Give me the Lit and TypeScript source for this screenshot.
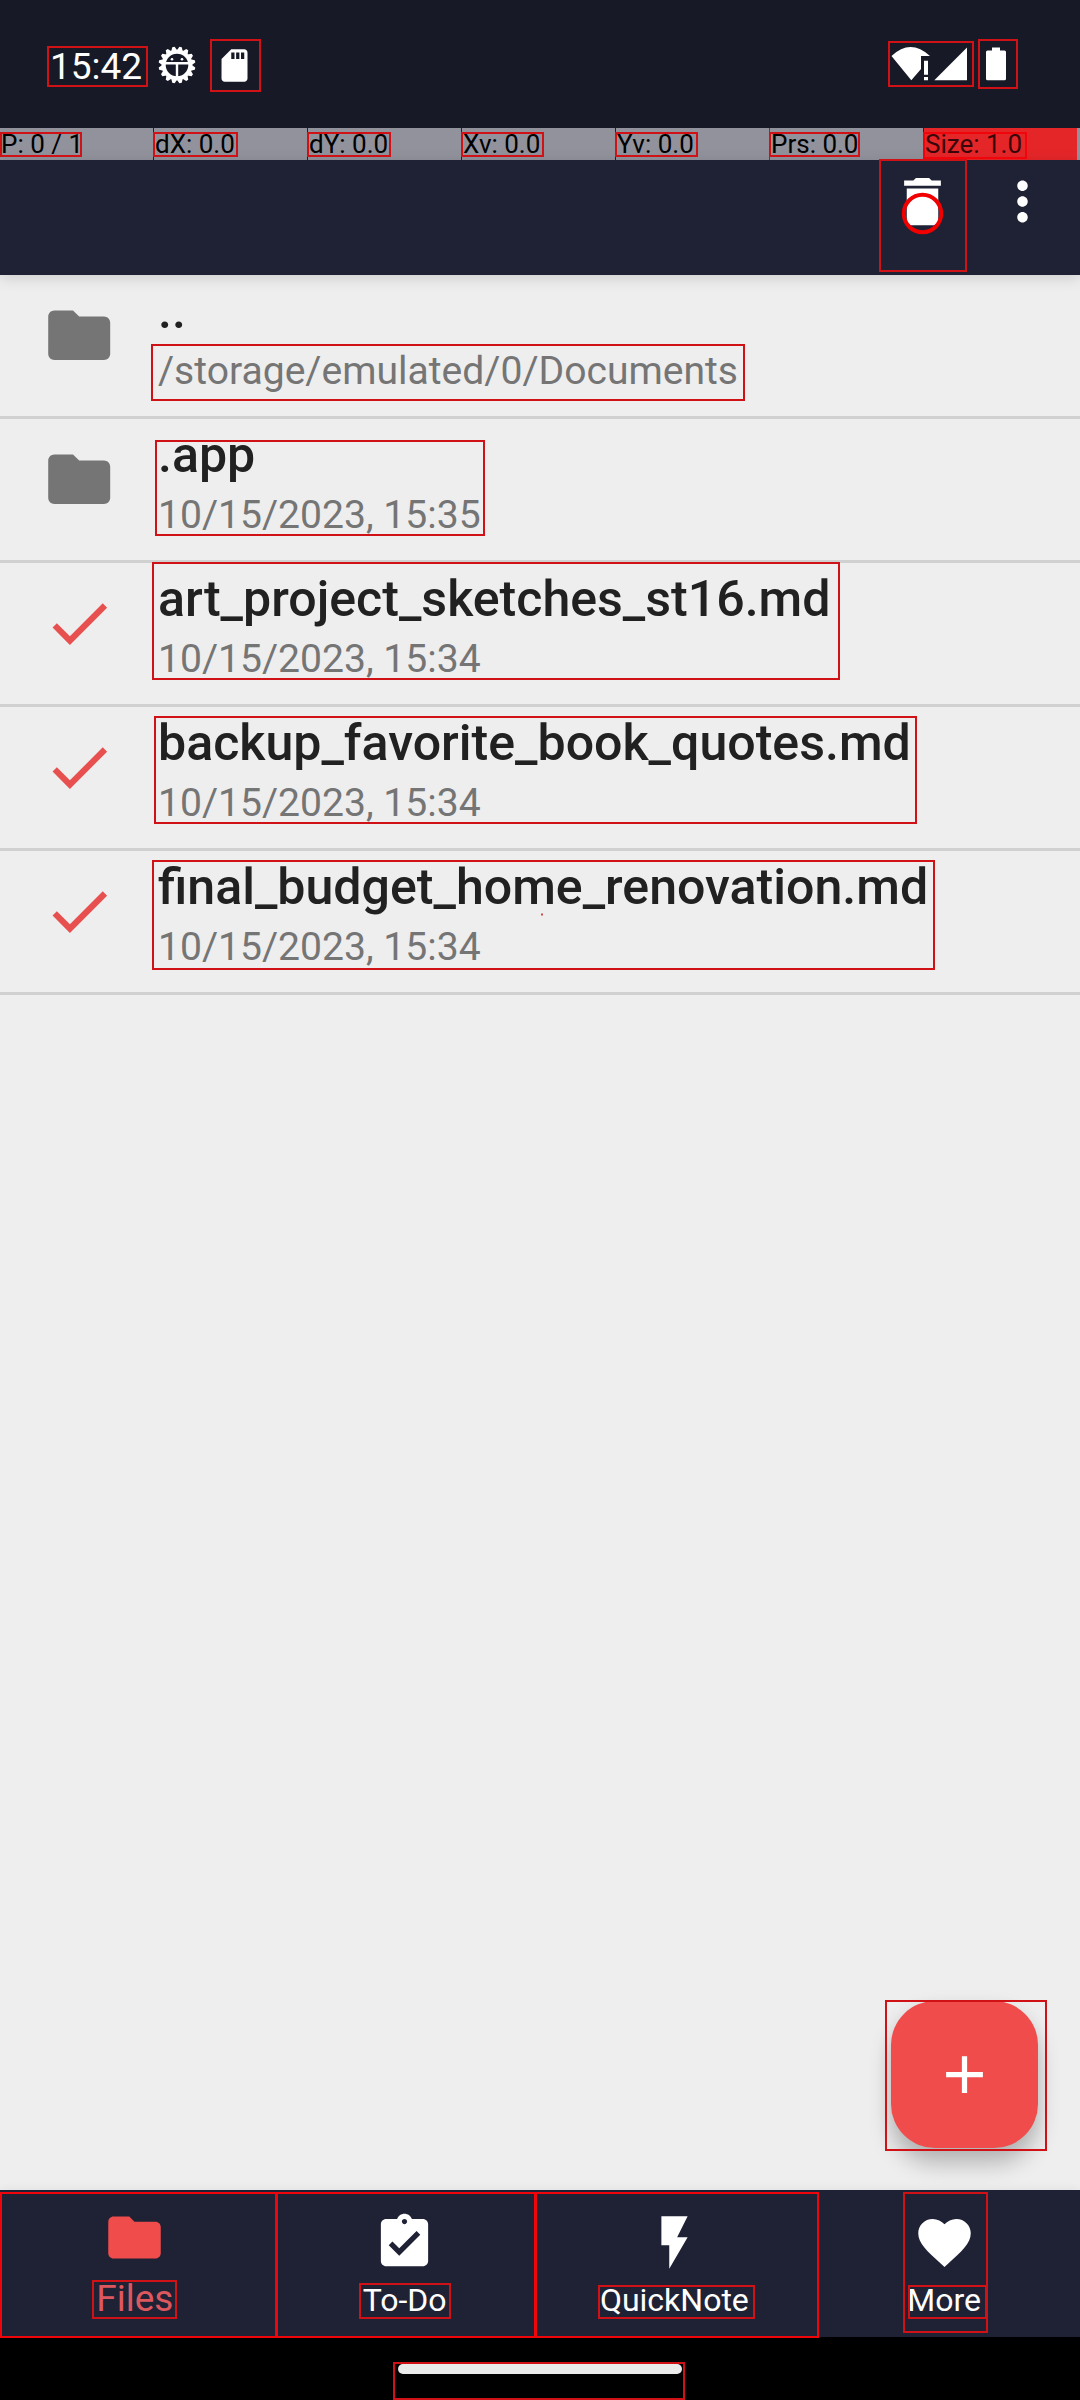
import { LitElement, html, css, svg } from "lit";
import { customElement } from "lit/decorators.js";
import { classMap } from "lit/directives/class-map.js";

const FOLDER = "M10 4H4c-1.1 0-1.99.9-1.99 2L2 18c0 1.1.9 2 2 2h16c1.1 0 2-.9 2-2V8c0-1.1-.9-2-2-2h-8l-2-2z";
const CHECK = "M9 16.2L4.8 12l-1.4 1.4L9 19 21 7l-1.4-1.4L9 16.2z";
const TRASH = "M6 19c0 1.1.9 2 2 2h8c1.1 0 2-.9 2-2V7H6v12zM19 4h-3.5l-1-1h-5l-1 1H5v2h14V4z";
const DOTS = "M12 8c1.1 0 2-.9 2-2s-.9-2-2-2-2 .9-2 2 .9 2 2 2zm0 2c-1.1 0-2 .9-2 2s.9 2 2 2 2-.9 2-2-.9-2-2-2zm0 6c-1.1 0-2 .9-2 2s.9 2 2 2 2-.9 2-2-.9-2-2-2z";
const TODO = "M19 3h-4.18C14.4 1.84 13.3 1 12 1c-1.3 0-2.4.84-2.82 2H5c-1.1 0-2 .9-2 2v14c0 1.1.9 2 2 2h14c1.1 0 2-.9 2-2V5c0-1.1-.9-2-2-2zm-7 0c.55 0 1 .45 1 1s-.45 1-1 1-1-.45-1-1 .45-1 1-1zm-2 14l-4-4 1.41-1.41L10 14.17l6.59-6.59L18 9l-8 8z";
const BOLT = "M7 2v11h3v9l7-12h-4l4-8z";
const HEART = "M12 21.35l-1.45-1.32C5.4 15.36 2 12.28 2 8.5 2 5.42 4.42 3 7.5 3c1.74 0 3.41.81 4.5 2.09C13.09 3.81 14.76 3 16.5 3 19.58 3 22 5.42 22 8.5c0 3.78-3.4 6.86-8.55 11.54L12 21.35z";
const PLUS = "M19 13h-6v6h-2v-6H5v-2h6V5h2v6h6v2z";
const SD = "M18 2h-8L4.02 8 4 20c0 1.1.9 2 2 2h12c1.1 0 2-.9 2-2V4c0-1.1-.9-2-2-2zm-6 6h-2V4h2v4zm3 0h-2V4h2v4zm3 0h-2V4h2v4z";

const icon = (path: string, cls: string) =>
  html`<svg class=${cls} viewBox="0 0 24 24"><path d=${path} fill="currentColor"></path></svg>`;

const ENTRIES = [
  { name: "..", detail: "/storage/emulated/0/Documents", selected: false },
  { name: ".app", detail: "10/15/2023, 15:35", selected: false },
  { name: "art_project_sketches_st16.md", detail: "10/15/2023, 15:34", selected: true },
  { name: "backup_favorite_book_quotes.md", detail: "10/15/2023, 15:34", selected: true },
  { name: "final_budget_home_renovation.md", detail: "10/15/2023, 15:34", selected: true },
];

const POINTER = ["P: 0 / 1", "dX: 0.0", "dY: 0.0", "Xv: 0.0", "Yv: 0.0", "Prs: 0.0", "Size: 1.0"];

const TABS = [
  { label: "Files", path: FOLDER, active: true },
  { label: "To-Do", path: TODO, active: false },
  { label: "QuickNote", path: BOLT, active: false },
  { label: "More", path: HEART, active: false },
];

// Highlighted regions: left, top, right, bottom, and whether the outline is bright.
const MARKS: [number, number, number, number, boolean?][] = [
  [47, 46, 148, 87], [210, 39, 261, 92], [888, 41, 974, 87], [978, 39, 1018, 89],
  [0, 132, 82, 157], [153, 132, 238, 157], [307, 132, 391, 157], [461, 132, 544, 157],
  [615, 132, 698, 157], [769, 132, 860, 157], [923, 132, 1027, 159, true], [879, 159, 967, 272],
  [151, 344, 745, 401], [155, 440, 485, 536], [152, 562, 840, 680], [154, 716, 917, 824],
  [152, 860, 935, 970], [885, 2000, 1047, 2151],
  [0, 2192, 277, 2338, true], [276, 2192, 536, 2338, true], [535, 2192, 819, 2338, true], [903, 2192, 988, 2333],
  [92, 2280, 177, 2319], [359, 2283, 451, 2319], [598, 2285, 755, 2319], [908, 2285, 987, 2319],
  [393, 2362, 685, 2400],
];

@customElement("status-bar")
class StatusBar extends LitElement {
  static styles = css`
    :host { display: flex; height: 128px; box-sizing: border-box; padding: 0 74px 0 50px; background: #171926; color: #fff; justify-content: space-between; }
    .group { display: flex; align-items: center; height: 128px; }
    .time { font-size: 37px; line-height: 44px; width: 108px; padding-top: 5px; white-space: nowrap; }
    .gear { width: 38px; height: 38px; margin-top: 2px; }
    .sd { width: 39px; height: 39px; margin: 2px 0 0 19px; }
    .signal { width: 116px; height: 34px; }
  `;
  render() {
    const teeth = Array.from({ length: 16 }, (_, i) => i * 22.5 + 11.25);
    return html`
      <div class="group">
        <div class="time">15:42</div>
        <svg class="gear" viewBox="-19 -19 38 38">
          ${teeth.map((a) => svg`<path d="M-3-14.5L-1.2-18.4H1.2L3-14.5z" fill="#fff" transform="rotate(${a})"></path>`)}
          <circle r="13.3" fill="none" stroke="#fff" stroke-width="4"></circle>
          <path d="M-12.5-1.7H12.5M0-1.7V13" stroke="#fff" stroke-width="2.4"></path>
          <circle cx="-5" cy="-5.8" r="1.3" fill="#fff"></circle>
          <circle cx="5" cy="-5.8" r="1.3" fill="#fff"></circle>
        </svg>
        ${icon(SD, "sd")}
      </div>
      <div class="group">
        <svg class="signal" viewBox="0 0 116 34">
          <path d="M1.5 9Q20.5-9 40 9H31V22L21.3 33.3z" fill="#fff"></path>
          <path d="M34 13.7h4v14h-4zM34 30h4v3.3h-4zM44.3 33.3L77 .5V33.3z" fill="#fff"></path>
          <path d="M102 .5h8V3.5h4.5q1.5 0 1.5 1.5V31.8q0 1.5-1.5 1.5h-17q-1.5 0-1.5-1.5V5q0-1.5 1.5-1.5H102z" fill="#fff"></path>
        </svg>
      </div>
    `;
  }
}

@customElement("pointer-strip")
class PointerStrip extends LitElement {
  static styles = css`
    :host { display: flex; gap: 1px; height: 32px; background: #1f2135; color: #000; }
    .cell { width: 153px; height: 32px; flex: none; box-sizing: border-box; padding-left: 1px; font-size: 26px; line-height: 33px; background: #92929c; white-space: nowrap; }
    .cell.size { background: #e52629; color: #3a0508; }
    .cell.pressure { box-shadow: -1px 0 #a5222b; }
    .rest { flex: 1; background: #92929c; margin-left: -1px; }
  `;
  render() {
    return html`${POINTER.map((t, i) => html`<div class=${classMap({ cell: true, pressure: i === 5, size: i === 6 })}>${t}</div>`)}<div class="rest"></div>`;
  }
}

@customElement("file-row")
class FileRow extends LitElement {
  static properties = { entry: { attribute: false } };
  declare entry: (typeof ENTRIES)[number];
  static styles = css`
    :host { display: flex; height: 144px; box-sizing: border-box; border-bottom: 3px solid #d0d0d0; padding-left: 42px; }
    .icon { width: 74.4px; height: 74.4px; flex: none; margin-top: 22.6px; color: #757575; }
    .icon.selected { color: #e8504f; }
    .text { display: flex; flex-direction: column; padding: 6px 0 0 41.6px; white-space: nowrap; }
    .name { font-size: 50.1px; line-height: 60px; font-weight: 500; color: #212121; }
    .detail { font-size: 39.1px; line-height: 60px; color: #757575; }
  `;
  render() {
    const e = this.entry;
    return html`
      ${icon(e.selected ? CHECK : FOLDER, e.selected ? "icon selected" : "icon")}
      <div class="text">
        <div class="name">${e.name}</div>
        <div class="detail">${e.detail}</div>
      </div>
    `;
  }
}

@customElement("nav-bar")
class NavBar extends LitElement {
  static styles = css`
    :host { display: grid; grid-template-columns: repeat(4, 1fr); height: 147px; box-sizing: border-box; padding-right: 1px; background: #1f2135; color: #fff; box-shadow: 0 -1px 9px rgba(0, 0, 0, 0.06); position: relative; }
    .tab { display: flex; flex-direction: column; align-items: center; padding-top: 20.7px; }
    .icon { width: 63px; height: 63px; flex: none; }
    .label { font-size: 32px; line-height: 40px; margin-top: 6.5px; white-space: nowrap; }
    .active { padding-top: 15.5px; }
    .active .icon { color: #ef4c4b; }
    .active .label { font-size: 37px; margin-top: 10px; color: #dc585e; }
  `;
  render() {
    return TABS.map((t) => html`
      <div class=${classMap({ tab: true, active: t.active })}>
        ${icon(t.path, "icon")}
        <div class="label">${t.label}</div>
      </div>
    `);
  }
}

@customElement("app-root")
class AppRoot extends LitElement {
  static styles = css`
    :host { display: flex; flex-direction: column; position: relative; width: 1080px; height: 2400px; overflow: hidden; background: #eee; font-family: Roboto, "Liberation Sans", sans-serif; }
    .appbar { display: flex; justify-content: flex-end; height: 115px; box-sizing: border-box; padding: 9.5px 26px 0 0; gap: 37px; background: #1f2135; color: #fff; box-shadow: 0 3px 14px rgba(0, 0, 0, 0.14); position: relative; }
    .action { width: 63px; height: 63px; }
    .list { display: flex; flex-direction: column; flex: 1; }
    .fab { position: absolute; left: 891px; top: 2001px; width: 147px; height: 147px; border-radius: 44px; display: flex; align-items: center; justify-content: center; background: #ef4c4b; color: #fff; box-shadow: 0 16px 22px rgba(0, 0, 0, 0.23), 0 2px 18px rgba(0, 0, 0, 0.05); }
    .plus { width: 63px; height: 63px; }
    .gesture { display: flex; justify-content: center; height: 63px; box-sizing: border-box; padding-top: 27px; background: #000; }
    .handle { width: 284px; height: 10px; border-radius: 5px; background: #ebebeb; }
    .marks { position: absolute; left: 0; top: 0; width: 1080px; height: 2400px; pointer-events: none; }
  `;
  render() {
    return html`
      <status-bar></status-bar>
      <pointer-strip></pointer-strip>
      <div class="appbar">${icon(TRASH, "action")}${icon(DOTS, "action")}</div>
      <div class="list">${ENTRIES.map((e) => html`<file-row .entry=${e}></file-row>`)}</div>
      <div class="fab">${icon(PLUS, "plus")}</div>
      <nav-bar></nav-bar>
      <div class="gesture"><div class="handle"></div></div>
      <svg class="marks" viewBox="0 0 1080 2400" fill="none">
        ${MARKS.map(([l, t, r, b, bright]) => svg`<rect x=${l + 1} y=${t + 1} width=${r - l - 2} height=${b - t - 2} stroke=${bright ? "#f0060a" : "#d01216"} stroke-width="2"></rect>`)}
        <circle cx="922.5" cy="213.5" r="18.7" stroke="#f20000" stroke-width="4"></circle>
        <rect x="541" y="913.5" width="2" height="2" fill="#d04a4a"></rect>
      </svg>
    `;
  }
}
